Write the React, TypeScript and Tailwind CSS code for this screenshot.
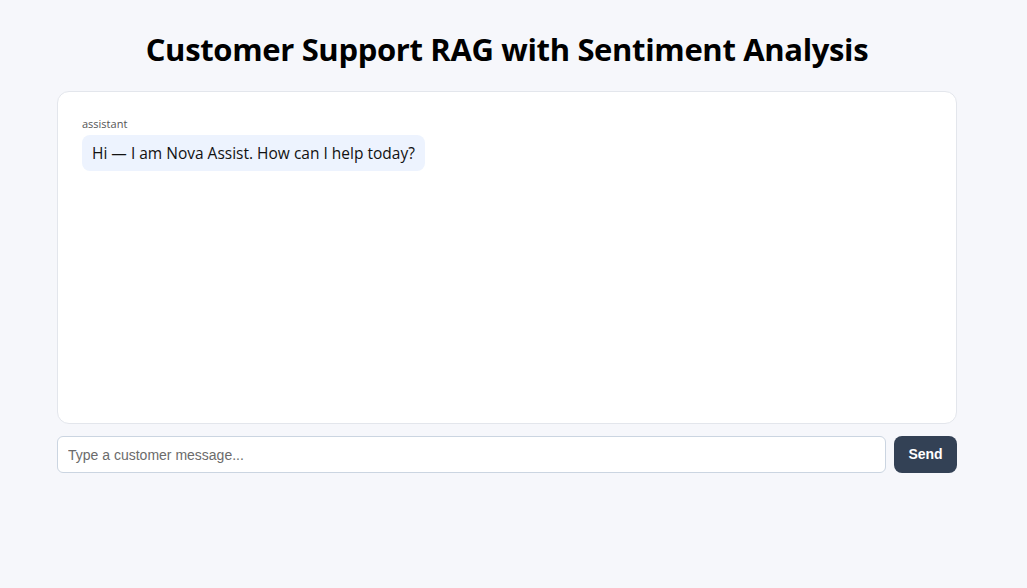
export default function App() {
  return (
    <div className="min-h-[588px] bg-[#f6f7fb] pr-[13px]">
      <div className="mx-auto w-[900px] pt-[26px]">
        <h1 className="text-center text-[31px] font-bold leading-[46px] text-black [font-family:'Open_Sans',sans-serif] tracking-[-0.35px]">
          Customer Support RAG with Sentiment Analysis
        </h1>
        <div className="mt-[19px] h-[333px] rounded-xl border border-[#e3e6ec] bg-white p-6 [font-family:'Open_Sans',sans-serif]">
          <div className="text-[11px] leading-[15px] text-[#555]">assistant</div>
          <div className="mt-[4px] inline-block rounded-lg bg-[#edf3fe] px-[10px] py-[7px] text-[15.5px] leading-[22px] text-[#111]">
            Hi — I am Nova Assist. How can I help today?
          </div>
        </div>
        <div className="mt-3 flex gap-2 [font-family:'Liberation_Sans',Arial,sans-serif]">
          <input
            className="h-[37px] flex-1 rounded-md border border-[#cbd5e1] bg-white px-[10px] text-[14px] text-[#111] placeholder:text-[#6b6b6b] outline-none"
            placeholder="Type a customer message..."
          />
          <button className="h-[37px] w-[63px] rounded-lg bg-[#334155] text-[14px] font-bold text-white">
            Send
          </button>
        </div>
      </div>
    </div>
  );
}
